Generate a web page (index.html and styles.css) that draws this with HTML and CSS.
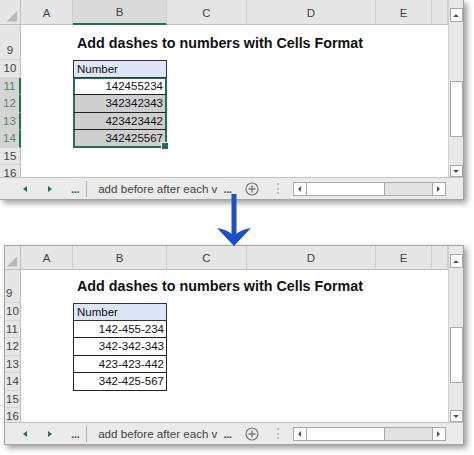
FILE: index.html
```html
<!DOCTYPE html>
<html lang="en">
<head>
  <meta charset="UTF-8" />
  <title>Add dashes to numbers with Cells Format</title>
  <link rel="stylesheet" href="styles.css">
</head>
<body>
  <!-- Avant -->
  <div class="win win-top">
    <div class="body">
      <div class="sheet">
        <div class="col-hdr">
          <div class="corner"><svg width="21" height="25" viewBox="0 0 21 25"><polygon points="18,11 18,22 7,22" fill="#b9b9b9"/></svg></div>
          <div>A</div><div class="on">B</div><div>C</div><div>D</div><div>E</div><div></div>
        </div>
        <div class="row r9"><div class="rh">9</div><div></div><div class="title">Add dashes to numbers with Cells Format</div></div>
        <div class="row"><div class="rh">10</div><div></div><div class="cell head">Number</div></div>
        <div class="row"><div class="rh on">11</div><div></div><div class="cell num pick first">142455234</div></div>
        <div class="row"><div class="rh on">12</div><div></div><div class="cell num pick shade">342342343</div></div>
        <div class="row"><div class="rh on">13</div><div></div><div class="cell num pick shade">423423442</div></div>
        <div class="row"><div class="rh on">14</div><div></div><div class="cell num pick shade last">342425567</div></div>
        <div class="row"><div class="rh">15</div><div></div><div></div></div>
        <div class="row"><div class="rh">16</div><div></div><div></div></div>
      </div>
      <div class="vscroll">
        <div class="vbtn"><span class="up"></span></div>
        <div class="vthumb"></div>
        <div class="vbtn bottom"><span class="down"></span></div>
      </div>
    </div>
    <div class="tabs">
      <span class="tl"></span>
      <span class="tr"></span>
      <span class="dots">...</span>
      <span class="sep"></span>
      <span class="tabname">add before after each v</span>
      <span class="dots more">...</span>
      <svg class="plus" width="14" height="14" viewBox="0 0 14 14"><circle cx="7" cy="7" r="6" fill="none" stroke="#7a7a7a" stroke-width="1.2"/><path d="M7 3.5v7M3.5 7h7" stroke="#7a7a7a" stroke-width="1.4"/></svg>
      <span class="vdots"></span>
      <div class="hscroll">
        <div class="hbtn"><span class="sl"></span></div>
        <div class="hthumb"></div>
        <div class="htrack"></div>
        <div class="hbtn right"><span class="sr"></span></div>
      </div>
    </div>
  </div>

  <svg class="arrow" width="40" height="58" viewBox="0 0 40 58">
    <rect x="17.5" y="2" width="5" height="42" fill="#1e4fc6"/>
    <path d="M20 54 L3 36 Q13 37 20 44 Q27 37 37 36 Z" fill="#1e4fc6"/>
  </svg>

  <!-- Après -->
  <div class="win win-bottom">
    <div class="body">
      <div class="sheet">
        <div class="col-hdr">
          <div class="corner"><svg width="16" height="24" viewBox="0 0 16 24"><polygon points="13,10 13,21 2,21" fill="#b9b9b9"/></svg></div>
          <div>A</div><div>B</div><div>C</div><div>D</div><div>E</div><div></div>
        </div>
        <div class="row r9"><div class="rh">9</div><div></div><div class="title">Add dashes to numbers with Cells Format</div></div>
        <div class="row"><div class="rh">10</div><div></div><div class="cell head">Number</div></div>
        <div class="row"><div class="rh">11</div><div></div><div class="cell num">142-455-234</div></div>
        <div class="row"><div class="rh">12</div><div></div><div class="cell num">342-342-343</div></div>
        <div class="row"><div class="rh">13</div><div></div><div class="cell num">423-423-442</div></div>
        <div class="row"><div class="rh">14</div><div></div><div class="cell num">342-425-567</div></div>
        <div class="row"><div class="rh">15</div><div></div><div></div></div>
        <div class="row"><div class="rh">16</div><div></div><div></div></div>
      </div>
      <div class="vscroll">
        <div class="vbtn"><span class="up"></span></div>
        <div class="vthumb"></div>
        <div class="vbtn bottom"><span class="down"></span></div>
      </div>
    </div>
    <div class="tabs">
      <span class="tl"></span>
      <span class="tr"></span>
      <span class="dots">...</span>
      <span class="sep"></span>
      <span class="tabname">add before after each v</span>
      <span class="dots more">...</span>
      <svg class="plus" width="14" height="14" viewBox="0 0 14 14"><circle cx="7" cy="7" r="6" fill="none" stroke="#7a7a7a" stroke-width="1.2"/><path d="M7 3.5v7M3.5 7h7" stroke="#7a7a7a" stroke-width="1.4"/></svg>
      <span class="vdots"></span>
      <div class="hscroll">
        <div class="hbtn"><span class="sl"></span></div>
        <div class="hthumb"></div>
        <div class="htrack"></div>
        <div class="hbtn right"><span class="sr"></span></div>
      </div>
    </div>
  </div>
</body>
</html>
```

FILE: styles.css
```css
* {
  box-sizing: border-box;
}

body {
  margin: 0;
  width: 474px;
  height: 455px;
  overflow: hidden;
  position: relative;
  background: #fff;
  font-family: "Liberation Sans", Arial, sans-serif;
  color: #111;
}

/* Fenêtres Excel */
.win {
  --rh: 21px;
  --hdr: 25px;
  --r9: 35px;
  --tabpad: 23px;
  width: 464px;
  height: 200px;
  display: flex;
  flex-direction: column;
  background: #fff;
  border-right: 1px solid #a3a3a3;
  border-bottom: 1px solid #a3a3a3;
  box-shadow: 3px 3px 6px rgba(0, 0, 0, 0.4);
}

.win-bottom {
  --rh: 16px;
  --hdr: 24px;
  --r9: 33px;
  --tabpad: 18px;
  width: 460px;
  margin: 45px 0 0 4px;
  border: 1px solid #a3a3a3;
}

.body {
  flex: 1;
  display: flex;
  min-height: 0;
}

.sheet {
  flex: 1;
  overflow: hidden;
}

/* En-têtes de colonnes */
.col-hdr {
  display: grid;
  grid-template-columns: var(--rh) 52px 94px 80px 129px 56px 1fr;
  height: var(--hdr);
  background: #e6e6e6;
  border-bottom: 1px solid #bdbdbd;
}

.col-hdr div {
  display: flex;
  align-items: center;
  justify-content: center;
  border-right: 1px solid #cdcdcd;
  font-size: 11.5px;
  color: #444;
}

.col-hdr .corner {
  border-right: 1px solid #bdbdbd;
}

.col-hdr .on {
  background: #dadada;
  border-bottom: 2px solid #217346;
}

/* Lignes */
.row {
  display: grid;
  grid-template-columns: var(--rh) 52px 94px 1fr;
  height: 17.5px;
}

.rh {
  display: flex;
  align-items: center;
  justify-content: center;
  background: #e6e6e6;
  border-right: 1px solid #bdbdbd;
  border-bottom: 1px solid #d5d5d5;
  font-size: 11.5px;
  color: #444;
}

.win-bottom .rh {
  justify-content: flex-start;
  padding-left: 1px;
}

.rh.on {
  background: #d4d4d4;
  color: #5a8466;
  border-right: 2px solid #217346;
}

.r9 {
  height: var(--r9);
}

.r9 .rh {
  align-items: flex-end;
  padding-bottom: 3px;
}

.title {
  grid-column: 3 / 5;
  align-self: end;
  padding: 0 0 9px 4px;
  font-size: 14.3px;
  font-weight: bold;
  color: #111;
  white-space: nowrap;
}

/* Cellules */
.cell {
  display: flex;
  align-items: center;
  padding: 0 2px;
  font-size: 11.5px;
}

.cell.head {
  background: #dce6f6;
  border: 1px solid #333;
  padding-left: 3px;
}

.cell.num {
  position: relative;
  justify-content: flex-end;
  border: 1px solid #222;
  border-top: none;
}

.cell.pick {
  border-left: 2px solid #217346;
  border-right: 2px solid #217346;
}

.cell.first {
  border-top: 1px solid #217346;
}

.cell.last {
  border-bottom: 2px solid #217346;
}

.cell.shade {
  background: #cfcfcf;
}

.cell.last::after {
  content: "";
  position: absolute;
  right: -4px;
  bottom: -4px;
  width: 6px;
  height: 6px;
  background: #217346;
  border: 1px solid #fff;
}

/* Barre de défilement verticale */
.vscroll {
  width: 15px;
  display: flex;
  flex-direction: column;
  align-items: center;
  padding-top: 8px;
  background: #e8e8e8;
  border-left: 1px solid #d0d0d0;
}

.vbtn {
  width: 13px;
  height: 14px;
  display: flex;
  align-items: center;
  justify-content: center;
  background: #fff;
  border: 1px solid #a8a8a8;
}

.vbtn.bottom {
  margin-top: auto;
  height: 12px;
}

.vthumb {
  width: 13px;
  height: 56px;
  margin-top: 59px;
  background: #fff;
  border: 1px solid #a8a8a8;
}

.up,
.down,
.tl,
.tr,
.sl,
.sr {
  width: 0;
  height: 0;
  display: inline-block;
}

.up {
  border-left: 3px solid transparent;
  border-right: 3px solid transparent;
  border-bottom: 3px solid #555;
}

.down {
  border-left: 3px solid transparent;
  border-right: 3px solid transparent;
  border-top: 3px solid #555;
}

/* Barre des onglets */
.tabs {
  height: 22px;
  display: flex;
  align-items: center;
  padding-left: var(--tabpad);
  background: #ebebeb;
  border-top: 1px solid #c4c4c4;
  font-size: 11.6px;
  color: #444;
}

.tl {
  border-top: 3.5px solid transparent;
  border-bottom: 3.5px solid transparent;
  border-right: 4px solid #217346;
}

.tr {
  margin-left: 21px;
  border-top: 3.5px solid transparent;
  border-bottom: 3.5px solid transparent;
  border-left: 4px solid #217346;
}

.dots {
  margin-left: 19px;
  color: #217346;
  font-weight: bold;
  letter-spacing: -0.5px;
}

.sep {
  width: 1px;
  height: 16px;
  margin-left: 7px;
  background: #b3b3b3;
}

.tabname {
  margin-left: 11px;
  white-space: nowrap;
}

.dots.more {
  margin-left: 6px;
}

.plus {
  margin-left: 13px;
}

.vdots {
  width: 0;
  height: 11px;
  margin-left: 18px;
  border-left: 2px dotted #c0c0c0;
}

.hscroll {
  width: 153px;
  height: 14px;
  margin-left: 14px;
  display: flex;
  border: 1px solid #a8a8a8;
}

.hbtn {
  width: 13px;
  display: flex;
  align-items: center;
  justify-content: center;
  background: #fff;
  border-right: 1px solid #a8a8a8;
}

.hbtn.right {
  border-right: none;
  border-left: 1px solid #a8a8a8;
}

.hthumb {
  width: 78px;
  background: #fff;
  border-right: 1px solid #a8a8a8;
}

.htrack {
  flex: 1;
  background: #e2e2e2;
}

.sl {
  border-top: 3px solid transparent;
  border-bottom: 3px solid transparent;
  border-right: 3px solid #555;
}

.sr {
  border-top: 3px solid transparent;
  border-bottom: 3px solid transparent;
  border-left: 3px solid #555;
}

/* Flèche entre les deux captures */
.arrow {
  position: absolute;
  left: 214px;
  top: 192px;
  z-index: 2;
}
```
